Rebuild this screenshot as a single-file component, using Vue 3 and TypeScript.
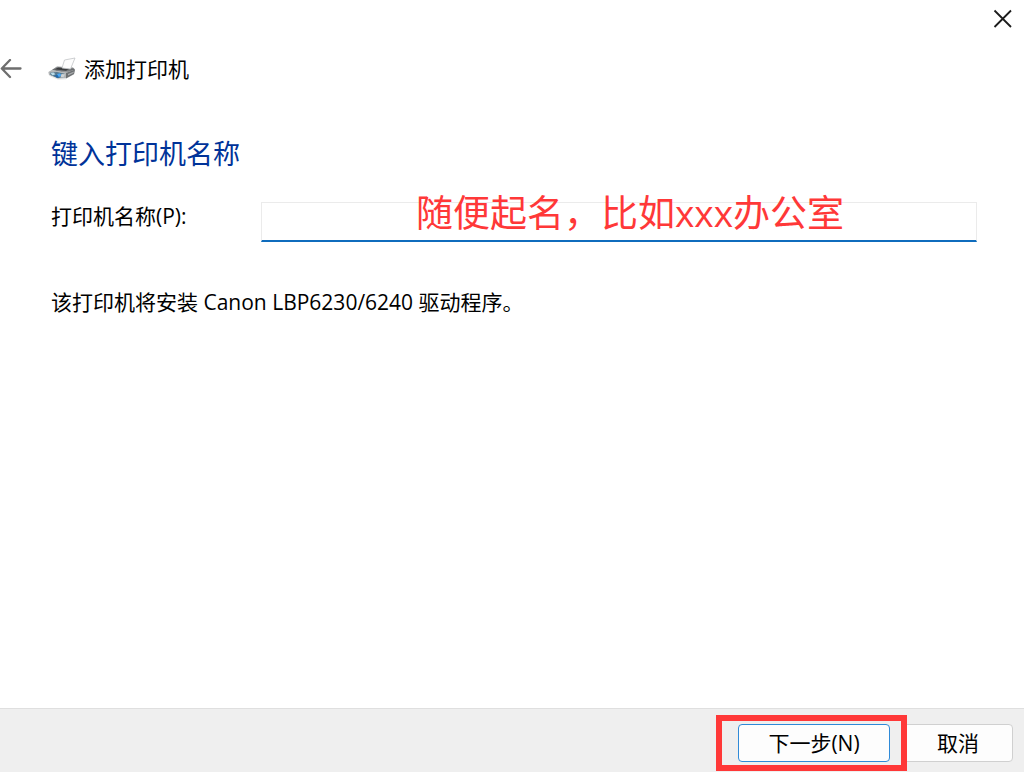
<script setup lang="ts">
import { ref } from 'vue'

const printerName = ref('')
const driver = 'Canon LBP6230/6240'
</script>

<template>
  <div class="wizard">
    <div class="titlebar">
      <button class="icon-button close" type="button" aria-label="关闭">
        <svg width="20" height="20" viewBox="0 0 20 20" fill="none" stroke="#1c1c1c" stroke-width="1.8">
          <path d="M1.5 1.5 18 18M18 1.5 1.5 18" />
        </svg>
      </button>
    </div>

    <header class="header">
      <button class="icon-button back" type="button" aria-label="返回">
        <svg width="22" height="20" viewBox="0 0 22 20" fill="none" stroke="#6e6e6e" stroke-width="2.3" stroke-linecap="round" stroke-linejoin="round">
          <path d="M10 1 1.8 9.5 10 18M2 9.5H20.5" />
        </svg>
      </button>
      <svg class="printer" width="28" height="24" viewBox="0 0 28 24" aria-hidden="true">
        <defs>
          <linearGradient id="body" x1="0" y1="0" x2="0" y2="1">
            <stop offset="0" stop-color="#a2a4a6" />
            <stop offset="0.5" stop-color="#66696b" />
            <stop offset="1" stop-color="#b8babc" />
          </linearGradient>
        </defs>
        <path d="M0.5 15 9 9.5 22 10.5 27 12.5 26 17.5 18 21.5 10 22 1 18Z" fill="#d0d2d3" />
        <path d="M4 13 9 9.5 25 10.5 27 12.5 18 16Z" fill="url(#body)" />
        <path d="M7 12.2 10 10.5 22 11.5 18 13.7Z" fill="#3c3e40" />
        <path d="M14 11 16.5 3 27 1 22.5 12Z" fill="#fdfdfd" stroke="#c2c4c6" stroke-width="0.8" />
        <path d="M18 16 27 12.5 26 17 18 21.5Z" fill="#6d7072" />
        <path d="M20 17 26 14.5 25.5 16 20 18.6Z" fill="#a9abad" />
        <path d="M0.5 15 4 13 18 16V21L10 21.5 1 18Z" fill="#b2b5b7" />
        <path d="M2 15.8 9 15 16.5 16.8 15 20.3 9.5 21.3 2.5 18Z" fill="#55798f" />
        <path d="M2.5 16 5.5 15.6 7.5 17.3 4.5 18.4Z" fill="#b9dbe8" />
        <path d="M9 17 12 16.3 13.5 18.5 10.5 20.2Z" fill="#4aa6f2" />
        <path d="M6.5 18.8 9 17.8 11 20.2 9.5 21.1Z" fill="#1f68ae" />
        <path d="M13.5 17 17 17.2 15.5 20.2 12.5 20.5Z" fill="#cfd2d3" />
        <path d="M1.5 18.5 10 22.2 18 21.8" fill="none" stroke="#e4e6e7" />
      </svg>
      <span class="title">添加打印机</span>
    </header>

    <main class="content">
      <h1>键入打印机名称</h1>
      <div class="row">
        <label for="printer-name">打印机名称(P):</label>
        <div class="field">
          <input id="printer-name" v-model="printerName" type="text" />
          <span class="note">随便起名，比如xxx办公室</span>
        </div>
      </div>
      <p>该打印机将安装 {{ driver }} 驱动程序。</p>
    </main>

    <footer class="footer">
      <div class="next-wrap">
        <button class="button next" type="button">下一步(N)</button>
        <span class="marker"></span>
      </div>
      <button class="button cancel" type="button">取消</button>
    </footer>
  </div>
</template>

<style>
body {
  margin: 0;
}
</style>

<style scoped>
.wizard {
  display: flex;
  flex-direction: column;
  box-sizing: border-box;
  min-height: 100vh;
  background: #fff;
  color: #000;
  font: 21px/28px "Open Sans", "Noto Sans CJK SC", sans-serif;
}
.titlebar {
  display: flex;
  justify-content: flex-end;
  padding: 9px 11px 0 0;
}
.icon-button {
  display: flex;
  padding: 0;
  border: 0;
  background: none;
}
.header {
  display: flex;
  align-items: center;
  padding-top: 26px;
}
.printer {
  margin-left: 26px;
}
.title {
  margin-left: 8px;
}
.content {
  flex: 1;
  padding: 51px 47px 0 51px;
}
h1 {
  margin: 0;
  color: #003399;
  font-size: 27px;
  font-weight: 400;
  line-height: 40px;
}
.row {
  display: flex;
  margin-top: 28px;
}
label {
  flex: none;
  width: 210px;
}
.field {
  position: relative;
  flex: 1;
}
input {
  display: block;
  box-sizing: border-box;
  width: 100%;
  height: 40px;
  padding: 0 8px;
  border: 1px solid #ebebeb;
  border-bottom: 2px solid #0f6cbd;
  outline: 0;
  background: #fff;
  color: inherit;
  font: inherit;
}
.note {
  position: absolute;
  top: -15px;
  left: 155px;
  color: #ff3838;
  font-size: 37px;
  line-height: 52px;
  white-space: nowrap;
  pointer-events: none;
}
p {
  margin: 46px 0 0;
}
.footer {
  display: flex;
  justify-content: flex-end;
  gap: 13px;
  padding: 15px 11px 10px;
  border-top: 1px solid #dfdfdf;
  background: #efefef;
}
.next-wrap {
  position: relative;
}
.button {
  box-sizing: border-box;
  height: 38px;
  padding: 0;
  border: 1px solid #d0d0d0;
  border-radius: 4px;
  background: #fdfdfd;
  color: #000;
  font: inherit;
}
.next {
  display: block;
  width: 152px;
  border-color: #2f8ad8;
}
.cancel {
  width: 110px;
}
.marker {
  position: absolute;
  inset: -9px -17px -9px -22px;
  border: 6px solid #ff3838;
  pointer-events: none;
}
</style>
